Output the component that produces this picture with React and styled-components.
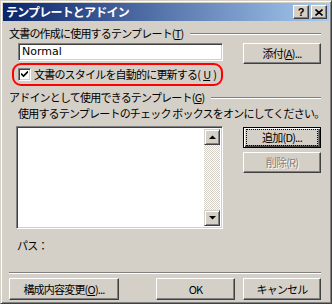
import React from 'react'
import styled, { createGlobalStyle } from 'styled-components'

const Global = createGlobalStyle`
  html, body { margin: 0; padding: 0; background: #d4d0c8; }
  body {
    font-family: "Noto Sans CJK JP", "Noto Sans", sans-serif;
    font-size: 11px;
    line-height: 13px;
    letter-spacing: -0.8px;
    color: #000;
  }
`

const Window = styled.div`
  box-sizing: border-box;
  width: 332px;
  height: 304px;
  background: #d4d0c8;
  border: 1px solid;
  border-color: #d4d0c8 #404040 #404040 #d4d0c8;
  box-shadow: inset 1px 1px #fff, inset -1px -1px #808080;
  padding: 2px;
  display: flex;
  flex-direction: column;
  overflow: hidden;
`

const TitleBar = styled.div`
  flex: none;
  height: 18px;
  background: linear-gradient(to right, #0a246a, #a6caf0);
  display: flex;
  align-items: center;
  padding: 0 2px 0 3px;
  color: #fff;
  font-weight: bold;
  font-size: 12px;
  line-height: 18px;
`

const TitleText = styled.div`
  flex: 1;
`

const CaptionButton = styled.div`
  box-sizing: border-box;
  width: 16px;
  height: 14px;
  background: #d4d0c8;
  border: 1px solid;
  border-color: #fff #404040 #404040 #fff;
  box-shadow: inset -1px -1px #808080;
  margin-left: ${p => p.$gap || 0}px;
  display: flex;
  align-items: center;
  justify-content: center;
  color: #000;
  font-family: "Liberation Sans", sans-serif;
  font-weight: bold;
  font-size: 11px;
  line-height: 12px;
  letter-spacing: 0;
`

const Content = styled.div`
  flex: 1;
  display: flex;
  flex-direction: column;
  padding: 0 8px 0 6px;
`

const GroupHeader = styled.div`
  flex: none;
  display: flex;
  align-items: center;
  height: 13px;
  margin-top: ${p => p.$top}px;
  white-space: nowrap;
`

const Etched = styled.div`
  flex: ${p => p.$full ? 'none' : 1};
  height: 0;
  border-top: 1px solid #808080;
  border-bottom: 1px solid #fff;
  margin-left: ${p => p.$left || 0}px;
  margin-top: ${p => p.$top || 0}px;
`

const U = styled.span`
  text-decoration: underline;
  text-underline-offset: 1px;
`

const Row = styled.div`
  flex: none;
  display: flex;
  justify-content: space-between;
  align-items: flex-start;
  margin-top: ${p => p.$top || 0}px;
  padding-left: 9px;
`

const Sunken = styled.div`
  box-sizing: border-box;
  border: 1px solid;
  border-color: #808080 #fff #fff #808080;
  box-shadow: inset 1px 1px #404040, inset -1px -1px #d4d0c8;
  background: #fff;
`

const TextInput = styled(Sunken)`
  width: 205px;
  height: 18px;
  padding: 0 3px;
  line-height: 16px;
  font-family: "DejaVu Sans", sans-serif;
  font-size: 11px;
  letter-spacing: 0;
`

const Button = styled.div`
  box-sizing: border-box;
  flex: none;
  width: ${p => p.$w || 78}px;
  height: ${p => p.$h || 21}px;
  background: #d4d0c8;
  border: 1px solid;
  border-color: ${p => p.$default ? '#000' : '#fff #404040 #404040 #fff'};
  box-shadow: ${p => p.$default
    ? 'inset 1px 1px #fff, inset -1px -1px #404040, inset -2px -2px #808080'
    : 'inset -1px -1px #808080'};
  display: flex;
  align-items: center;
  justify-content: center;
  color: ${p => p.$disabled ? '#808080' : '#000'};
  text-shadow: ${p => p.$disabled ? '1px 1px #fff' : 'none'};
  white-space: nowrap;
  margin-top: ${p => p.$top || 0}px;
  margin-left: ${p => p.$left || 0}px;
`

const Focus = styled.span`
  box-sizing: border-box;
  outline: 1px dotted #000;
  outline-offset: 1px;
  width: 68px;
  height: 13px;
  text-align: center;
`

const Highlight = styled.div`
  flex: none;
  box-sizing: border-box;
  margin-top: -1px;
  margin-left: 3px;
  width: 211px;
  height: 23px;
  border: 2px solid #ff0000;
  border-radius: 9px;
  display: flex;
  align-items: center;
  padding-left: 4px;
  gap: 3px;
  white-space: nowrap;
`

const CheckBox = styled(Sunken)`
  flex: none;
  width: 13px;
  height: 13px;
  display: flex;
  align-items: center;
  justify-content: center;
`

const Note = styled.div`
  flex: none;
  margin-top: ${p => p.$top}px;
  padding-left: ${p => p.$left || 9}px;
  height: 13px;
  white-space: nowrap;
`

const ListRow = styled.div`
  flex: none;
  display: flex;
  justify-content: space-between;
  align-items: flex-start;
  margin-top: 6px;
  padding-left: 7px;
`

const ListBox = styled(Sunken)`
  width: 207px;
  height: 103px;
  display: flex;
  justify-content: flex-end;
  padding: 2px;
`

const ScrollBar = styled.div`
  width: 16px;
  display: flex;
  flex-direction: column;
  justify-content: space-between;
  background-color: #fff;
  background-image: repeating-conic-gradient(#d4d0c8 0 25%, #fff 0 50%);
  background-size: 2px 2px;
`

const ArrowBtn = styled.div`
  box-sizing: border-box;
  width: 16px;
  height: 16px;
  background: #d4d0c8;
  border: 1px solid;
  border-color: #d4d0c8 #404040 #404040 #d4d0c8;
  box-shadow: inset 1px 1px #fff, inset -1px -1px #808080;
  display: flex;
  align-items: center;
  justify-content: center;
`

const SideButtons = styled.div`
  display: flex;
  flex-direction: column;
  padding-top: 1px;
`

const Footer = styled.div`
  flex: none;
  display: flex;
  align-items: center;
  margin-top: 4px;
`

const Spacer = styled.div`
  flex: 1;
`

const Arrow = ({ down }) => (
  <svg width="7" height="4" viewBox="0 0 7 4">
    <path d={down ? 'M0 0h7L3.5 3.5z' : 'M3.5 0.5L7 4H0z'} fill="#000" />
  </svg>
)

export default function App() {
  return (
    <>
      <Global />
      <Window>
        <TitleBar>
          <TitleText>テンプレートとアドイン</TitleText>
          <CaptionButton>?</CaptionButton>
          <CaptionButton $gap={2}>
            <svg width="8" height="7" viewBox="0 0 8 7">
              <path d="M0.5 0.5l7 6M7.5 0.5l-7 6" stroke="#000" strokeWidth="1.6" />
            </svg>
          </CaptionButton>
        </TitleBar>
        <Content>
          <GroupHeader $top={6}>
            文書の作成に使用するテンプレート(<U>T</U>)
            <Etched $left={6} />
          </GroupHeader>
          <Row $top={3}>
            <TextInput>Normal</TextInput>
            <Button>添付(<U>A</U>)...</Button>
          </Row>
          <Highlight>
            <CheckBox>
              <svg width="7" height="7" viewBox="0 0 7 7">
                <path d="M0 2.5l2.5 2.5L7 0.5" stroke="#000" strokeWidth="1.6" fill="none" />
              </svg>
            </CheckBox>
            文書のスタイルを自動的に更新する(<U>U</U>)
          </Highlight>
          <GroupHeader $top={5}>
            アドインとして使用できるテンプレート(<U>G</U>)
            <Etched $left={7} />
          </GroupHeader>
          <Note $top={3}>使用するテンプレートのチェック ボックスをオンにしてください。</Note>
          <ListRow>
            <ListBox>
              <ScrollBar>
                <ArrowBtn><Arrow /></ArrowBtn>
                <ArrowBtn><Arrow down /></ArrowBtn>
              </ScrollBar>
            </ListBox>
            <SideButtons>
              <Button $default><Focus>追加(D)...</Focus></Button>
              <Button $disabled $top={4}>削除(R)</Button>
            </SideButtons>
          </ListRow>
          <Note $top={10} $left={8}>パス：</Note>
          <Etched $full $top={20} />
          <Footer>
            <Button $w={110} $h={22}>構成内容変更(<U>O</U>)...</Button>
            <Spacer />
            <Button $w={79} $h={22}>OK</Button>
            <Button $w={78} $h={22} $left={8}>キャンセル</Button>
          </Footer>
        </Content>
      </Window>
    </>
  )
}
